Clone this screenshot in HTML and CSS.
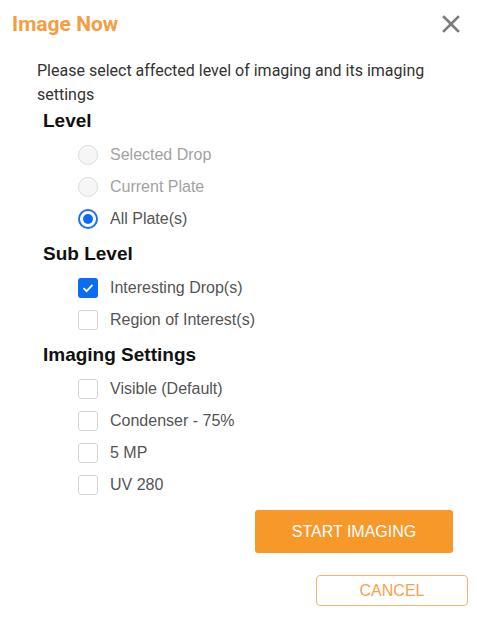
FILE: index.html
```html
<!DOCTYPE html>
<html>
<head>
<meta charset="utf-8">
<link rel="stylesheet" href="styles.css">
</head>
<body>
<div class="dialog">
  <div class="header">
    <div class="title">Image Now</div>
    <svg class="close" width="18" height="18" viewBox="0 0 18 18"><path d="M2 2 L16 16 M16 2 L2 16" stroke="#7b7b7b" stroke-width="2.6" stroke-linecap="square"/></svg>
  </div>
  <p class="desc">Please select affected level of imaging and its imaging settings</p>

  <div class="heading">Level</div>
  <div class="option disabled"><span class="radio"></span><span>Selected Drop</span></div>
  <div class="option disabled"><span class="radio"></span><span>Current Plate</span></div>
  <div class="option"><span class="radio on"></span><span>All Plate(s)</span></div>

  <div class="heading">Sub Level</div>
  <div class="option"><span class="check on"><svg width="14" height="14" viewBox="0 0 14 14"><path d="M2.5 7.2 L5.6 10.2 L11.5 3.8" fill="none" stroke="#fff" stroke-width="1.8"/></svg></span><span>Interesting Drop(s)</span></div>
  <div class="option"><span class="check"></span><span>Region of Interest(s)</span></div>

  <div class="heading">Imaging Settings</div>
  <div class="option"><span class="check"></span><span>Visible (Default)</span></div>
  <div class="option"><span class="check"></span><span>Condenser - 75%</span></div>
  <div class="option"><span class="check"></span><span>5 MP</span></div>
  <div class="option"><span class="check"></span><span>UV 280</span></div>

  <div class="footer">
    <button class="btn-primary">START IMAGING</button>
    <button class="btn-outline">CANCEL</button>
  </div>
</div>
</body>
</html>
```

FILE: styles.css
```css
html, body {
  margin: 0;
  padding: 0;
  background: #fff;
}
.dialog {
  width: 477px;
  height: 617px;
  box-sizing: border-box;
  font-family: Roboto, "Liberation Sans", Arial, sans-serif;
}
.header {
  display: flex;
  justify-content: space-between;
  align-items: center;
  padding: 11px 17px 0 12px;
  height: 26px;
}
.title {
  font-family: Roboto, sans-serif;
  font-weight: 700;
  font-size: 21px;
  line-height: 26px;
  color: #f49d42;
}
.close {
  display: block;
}
.desc {
  margin: 22px 30px 0 37px;
  font-family: Roboto, sans-serif;
  font-size: 16px;
  line-height: 24px;
  color: #333;
}
.heading {
  margin: 9px 0 8px 43px;
  font-family: "Liberation Sans", Arial, sans-serif;
  font-weight: 700;
  font-size: 19px;
  line-height: 20px;
  color: #111;
}
.desc + .heading {
  margin-top: 4px;
}
.option {
  display: flex;
  align-items: center;
  gap: 12px;
  height: 32px;
  padding-left: 78px;
  font-family: "Liberation Sans", Arial, sans-serif;
  font-size: 16px;
  color: #555;
}
.option.disabled {
  color: #a2a2a2;
}
.radio {
  width: 20px;
  height: 20px;
  box-sizing: border-box;
  border-radius: 50%;
  border: 1px solid #dcdcdc;
  background: #f6f6f6;
  position: relative;
}
.radio.on {
  border: 2px solid #1a73e8;
  background: #fff;
}
.radio.on::after {
  content: "";
  position: absolute;
  left: 3px;
  top: 3px;
  width: 10px;
  height: 10px;
  border-radius: 50%;
  background: #0b6cf0;
}
.check {
  width: 20px;
  height: 20px;
  box-sizing: border-box;
  border-radius: 3px;
  border: 1.5px solid #d6d6d6;
  background: #fff;
  display: flex;
  align-items: center;
  justify-content: center;
}
.check.on {
  border: none;
  background: #0b6cf0;
}
.footer {
  display: flex;
  flex-direction: column;
  align-items: flex-end;
  margin-top: 9px;
}
.btn-primary {
  width: 198px;
  height: 43px;
  margin-right: 24px;
  border: none;
  border-radius: 3px;
  background: #f7982a;
  color: #fff;
  font-family: "Liberation Sans", Arial, sans-serif;
  font-size: 16px;
  padding: 0;
}
.btn-outline {
  width: 152px;
  height: 31px;
  margin-top: 22px;
  margin-right: 9px;
  border: 1px solid #f6b46d;
  border-radius: 4px;
  background: #fff;
  color: #f5a34f;
  font-family: "Liberation Sans", Arial, sans-serif;
  font-size: 16px;
  padding: 0;
}
```
